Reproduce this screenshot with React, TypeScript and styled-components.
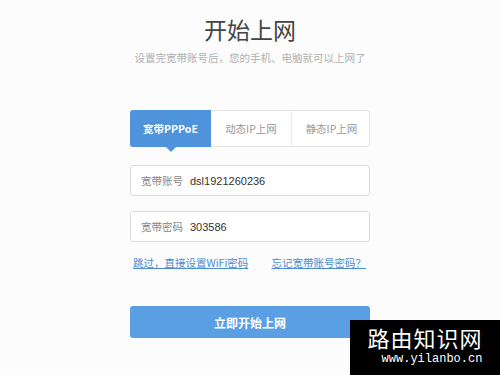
import styled, { createGlobalStyle } from "styled-components";

const GlobalStyle = createGlobalStyle`
    html, body {
        margin: 0;
        padding: 0;
        background: #fcfcfc;
    }
    body {
        font-family: "Noto Sans CJK SC", "Liberation Sans", sans-serif;
    }
`;

const Page = styled.div`
    position: relative;
    width: 500px;
    height: 375px;
    overflow: hidden;
    display: flex;
    flex-direction: column;
    align-items: center;
    padding-top: 12px;
    box-sizing: border-box;
`;

const Title = styled.h1`
    margin: 0;
    font-size: 23px;
    font-weight: 400;
    line-height: 34px;
    color: #444;
`;

const Subtitle = styled.p`
    margin: 3px 0 0;
    font-size: 10.5px;
    line-height: 18px;
    color: #b0b0b0;
`;

const Form = styled.div`
    width: 240px;
    margin-top: 43px;
    display: flex;
    flex-direction: column;
`;

const Tabs = styled.div`
    display: grid;
    grid-template-columns: 80px 80px 80px;
    height: 37px;
    border: 1px solid #e6e6e6;
    border-radius: 3px;
    background: #fff;
    box-sizing: border-box;
`;

interface TabProps {
    $active?: boolean;
}

const Tab = styled.div<TabProps>`
    position: relative;
    display: flex;
    align-items: center;
    justify-content: center;
    font-size: 10.5px;
    color: ${p => (p.$active ? "#fff" : "#999")};
    font-weight: ${p => (p.$active ? 700 : 400)};
    background: ${p => (p.$active ? "#4f93dc" : "transparent")};
    border-left: ${p => (p.$active ? "none" : "1px solid #eaeaea")};
    margin: ${p => (p.$active ? "-1px 0 -1px -1px" : "0")};
    border-radius: ${p => (p.$active ? "3px 0 0 3px" : "0")};

    &:nth-child(2) {
        border-left: none;
    }

    ${p =>
        p.$active &&
        `&::after {
            content: "";
            position: absolute;
            left: 50%;
            bottom: -5px;
            margin-left: -5px;
            border-left: 5px solid transparent;
            border-right: 5px solid transparent;
            border-top: 5px solid #4f93dc;
        }`}
`;

const Field = styled.div<{ $top: number }>`
    margin-top: ${p => p.$top}px;
    height: 31px;
    border: 1px solid #dcdcdc;
    border-radius: 3px;
    background: #fff;
    display: flex;
    align-items: center;
    padding: 0 10px;
    box-sizing: border-box;
`;

const FieldLabel = styled.span`
    color: #888;
    font-size: 10.5px;
    margin-right: 7px;
`;

const FieldValue = styled.span`
    color: #333;
    font-size: 11px;
    font-family: "Liberation Sans", "Noto Sans CJK SC", sans-serif;
`;

const Links = styled.div`
    margin-top: 13px;
    display: flex;
    justify-content: space-between;
    padding: 0 4px 0 3px;
`;

const Link = styled.a`
    font-size: 10.5px;
    color: #4a8cd2;
    text-decoration: underline;
    cursor: pointer;
`;

const Submit = styled.button`
    margin-top: 36px;
    height: 32px;
    border: none;
    border-radius: 3px;
    background: #5a9fe3;
    color: #fff;
    font-size: 12px;
    font-weight: 700;
    font-family: "Noto Sans CJK SC", sans-serif;
    cursor: pointer;
`;

const Watermark = styled.div`
    position: absolute;
    right: 0;
    bottom: 0;
    width: 150px;
    height: 55px;
    background: #000;
    color: #fff;
    display: flex;
    flex-direction: column;
    align-items: center;
    box-sizing: border-box;
    padding-top: 3px;
`;

const MarkName = styled.div`
    font-size: 22px;
    line-height: 28px;
    letter-spacing: 1px;
    font-family: "Noto Sans CJK SC", sans-serif;
`;

const MarkUrl = styled.div`
    font-size: 12px;
    line-height: 16px;
    margin-left: 14px;
    font-family: "Liberation Mono", monospace;
`;

export default function App() {
    return (
        <>
            <GlobalStyle />
            <Page>
                <Title>开始上网</Title>
                <Subtitle>设置完宽带账号后，您的手机、电脑就可以上网了</Subtitle>
                <Form>
                    <Tabs>
                        <Tab $active>宽带PPPoE</Tab>
                        <Tab>动态IP上网</Tab>
                        <Tab>静态IP上网</Tab>
                    </Tabs>
                    <Field $top={18}>
                        <FieldLabel>宽带账号</FieldLabel>
                        <FieldValue>dsl1921260236</FieldValue>
                    </Field>
                    <Field $top={15}>
                        <FieldLabel>宽带密码</FieldLabel>
                        <FieldValue>303586</FieldValue>
                    </Field>
                    <Links>
                        <Link>跳过，直接设置WiFi密码</Link>
                        <Link>忘记宽带账号密码？</Link>
                    </Links>
                    <Submit>立即开始上网</Submit>
                </Form>
                <Watermark>
                    <MarkName>路由知识网</MarkName>
                    <MarkUrl>www.yilanbo.cn</MarkUrl>
                </Watermark>
            </Page>
        </>
    );
}
